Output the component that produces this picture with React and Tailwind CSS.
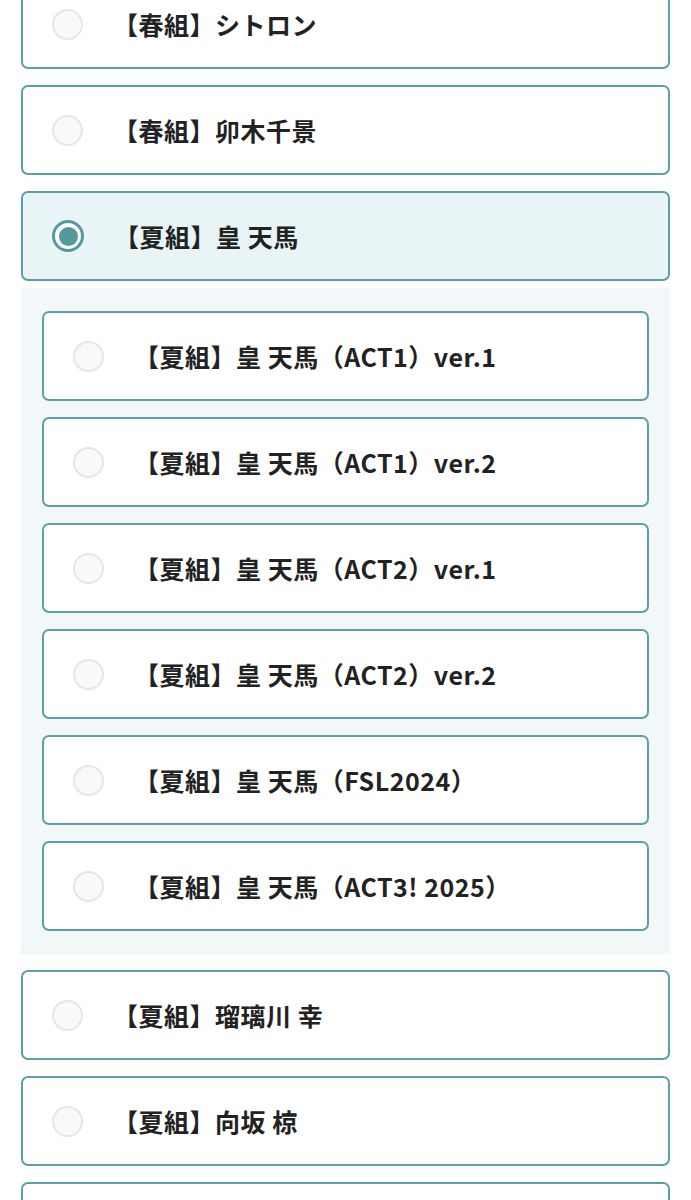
import React from "react";

const before = ["【春組】シトロン", "【春組】卯木千景"];
const selected = "【夏組】皇 天馬";
const variants = [
  "【夏組】皇 天馬（ACT1）ver.1",
  "【夏組】皇 天馬（ACT1）ver.2",
  "【夏組】皇 天馬（ACT2）ver.1",
  "【夏組】皇 天馬（ACT2）ver.2",
  "【夏組】皇 天馬（FSL2024）",
  "【夏組】皇 天馬（ACT3! 2025）",
];
const after = ["【夏組】瑠璃川 幸", "【夏組】向坂 椋"];

function Radio({ checked }) {
  if (checked) {
    return (
      <span className="flex h-[32px] w-[32px] shrink-0 items-center justify-center rounded-full border-[3px] border-[#53999f] bg-white">
        <span className="h-[19px] w-[19px] rounded-full bg-[#53999f]" />
      </span>
    );
  }
  return <span className="h-[31px] w-[31px] shrink-0 rounded-full border-2 border-[#e6e6e6] bg-[#f9f9f9]" />;
}

function Option({ label, checked }) {
  return (
    <div
      className={
        "flex h-[90px] items-center gap-[30px] rounded-[7px] border-2 border-[#5c9fa6] pl-[29px] " +
        (checked ? "bg-[#e8f4f6]" : "bg-white")
      }
    >
      <Radio checked={checked} />
      {label ? (
        <span className="text-[25px] font-bold leading-none tracking-[0.5px] text-[#222]">{label}</span>
      ) : null}
    </div>
  );
}

export default function App() {
  return (
    <div
      className="min-h-screen bg-white"
      style={{ fontFamily: '"Noto Sans CJK JP", "Noto Sans", sans-serif' }}
    >
      <div className="-mt-[21px] flex flex-col gap-4 px-[21px]">
        {before.map((l) => (
          <Option key={l} label={l} />
        ))}
        <div>
          <Option label={selected} checked />
          <div className="mt-[7px] flex flex-col gap-4 bg-[#f2f8f9] px-[21px] py-[23px]">
            {variants.map((l) => (
              <Option key={l} label={l} />
            ))}
          </div>
        </div>
        {after.map((l) => (
          <Option key={l} label={l} />
        ))}
        <Option />
      </div>
    </div>
  );
}
